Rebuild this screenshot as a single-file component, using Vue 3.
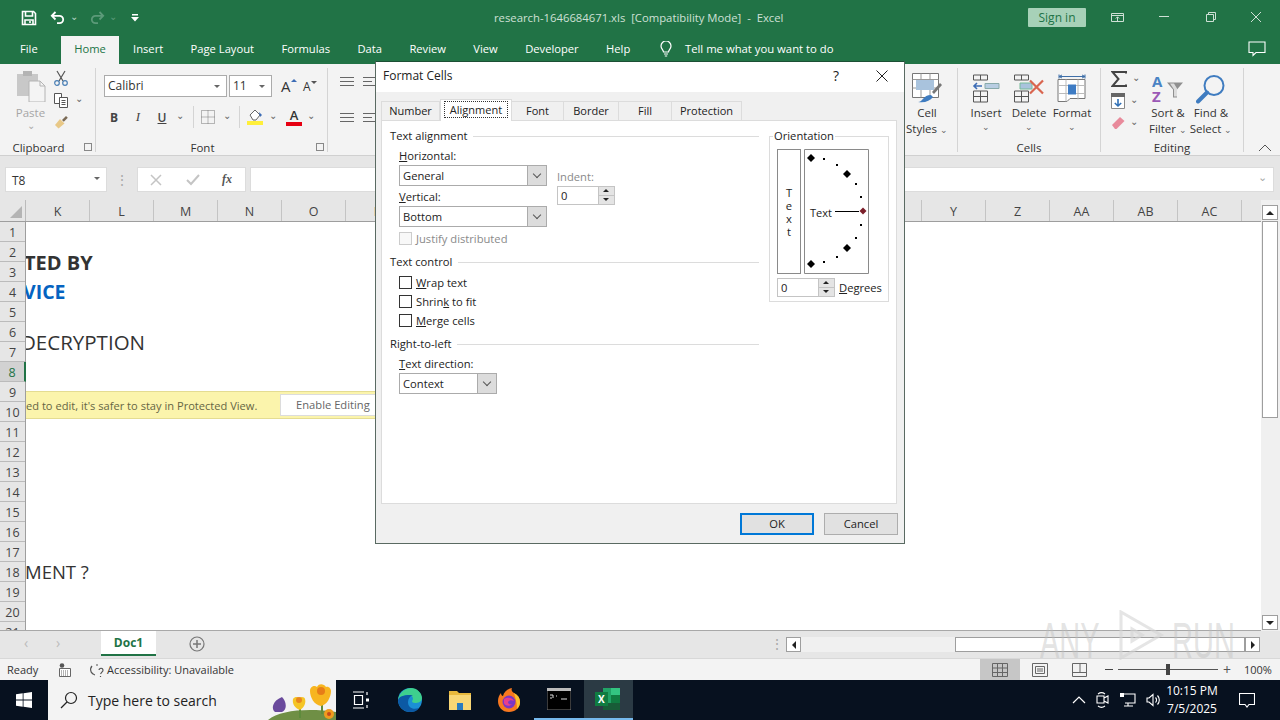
<script setup>
const tabs = ['Insert', 'Page Layout', 'Formulas', 'Data', 'Review', 'View', 'Developer', 'Help']
const columns = ['K', 'L', 'M', 'N', 'O', 'P', 'Q', 'R', 'S', 'T', 'U', 'V', 'W', 'X', 'Y', 'Z', 'AA', 'AB', 'AC', '']
const rows = Array.from({ length: 21 }, (_, i) => i + 1)
const dialogTabs = ['Number', 'Alignment', 'Font', 'Border', 'Fill', 'Protection']
const bigDots = [[7, 9], [43, 25], [43, 99], [7, 115]]
const smallDots = [[20, 10], [33, 16], [52, 35], [57, 48], [57, 76], [52, 89], [33, 108], [20, 113]]
const diamond = (x, y, r) => `${x},${y - r} ${x + r},${y} ${x},${y + r} ${x - r},${y}`
</script>

<template>
  <div class="window">
    <!-- title bar -->
    <div class="titlebar">
      <div class="qat">
        <svg class="q-save" width="16" height="16" viewBox="0 0 16 16" fill="none" stroke="#fff" stroke-width="1.6">
          <path d="M1.5 1.5h11l2 2v11h-13z" />
          <path d="M4.5 2v4h7V2M4 14.5V10h8v4.5" />
          <path d="M9 11v2" />
        </svg>
        <svg class="q-undo" width="16" height="14" viewBox="0 0 16 14" fill="none" stroke="#fff" stroke-width="1.8">
          <path d="M5.5 1 1.8 4.8l3.7 3.7M2 4.8h7.5a3.7 3.7 0 0 1 0 7.4H7" />
        </svg>
        <span class="q-caret">⌄</span>
        <svg class="q-redo" width="16" height="14" viewBox="0 0 16 14" fill="none" stroke="#5c9a79" stroke-width="1.8">
          <path d="M10.5 1l3.7 3.8-3.7 3.7M14 4.8H6.5a3.7 3.7 0 0 0 0 7.4H9" />
        </svg>
        <span class="q-caret dim">⌄</span>
        <svg class="q-more" width="8" height="8" viewBox="0 0 8 8" fill="#fff"><path d="M1 0h6v1.4H1zM0 3h8L4 7.5z" /></svg>
      </div>
      <div class="doc-title">research-1646684671.xls&nbsp; [Compatibility Mode]&nbsp; -&nbsp; Excel</div>
      <div class="signin">Sign in</div>
      <div class="win-btns">
        <svg width="14" height="12" viewBox="0 0 14 12" fill="none" stroke="#cfe0d6"><path d="M.5 2.5h12v8H.5zM.5 4.5h12M6.5 10V6M4.8 7.5l1.7-1.7 1.7 1.7" /></svg>
        <svg width="12" height="12" viewBox="0 0 12 12" stroke="#cfe0d6"><path d="M1 5.5h10" /></svg>
        <svg width="12" height="12" viewBox="0 0 12 12" fill="none" stroke="#cfe0d6"><path d="M1.5 3.5h7v7h-7zM3.5 3.5v-2h7v7h-2" /></svg>
        <svg width="12" height="12" viewBox="0 0 12 12" stroke="#cfe0d6"><path d="M1 1l10 10M11 1 1 11" /></svg>
      </div>
    </div>

    <!-- ribbon tabs -->
    <div class="tabbar">
      <span class="tab file">File</span>
      <span class="tab home">Home</span>
      <span v-for="t in tabs" :key="t" class="tab">{{ t }}</span>
      <svg class="bulb" width="14" height="16" viewBox="0 0 14 16" fill="none" stroke="#fff" stroke-width="1.2">
        <path d="M4.5 11c0-2-2.5-3-2.5-6a5 5 0 0 1 10 0c0 3-2.5 4-2.5 6zM5 13h4M5.8 15h2.4" />
      </svg>
      <span class="tell">Tell me what you want to do</span>
      <svg class="comment" width="18" height="16" viewBox="0 0 18 16" fill="none" stroke="#fff" stroke-width="1.1">
        <path d="M1 1h16v10.500H8l-3 3v-3H1z" />
      </svg>
    </div>

    <!-- ribbon -->
    <div class="ribbon">
      <div class="group g-clip">
        <div class="group-body clip-body">
          <div class="paste">
            <svg width="30" height="32" viewBox="0 0 30 32">
              <path d="M1 4h21v22H1z" fill="#c8c8c8" />
              <path d="M7 1h9v5H7z" fill="#b4b4b4" />
              <path d="M13 11h11l5 5v16H13z" fill="#f4f4f4" stroke="#b4b4b4" />
              <path d="M24 11v5h5" fill="none" stroke="#b4b4b4" />
            </svg>
            <span class="paste-label">Paste</span>
            <span class="caret light">⌄</span>
          </div>
          <div class="clip-tools">
            <svg width="16" height="16" viewBox="0 0 16 16" fill="none" stroke="#555" stroke-width="1.2">
              <path d="M4 1l6 10M12 1 6 11" />
              <circle cx="4" cy="13" r="2.300" stroke="#4a7fb5" />
              <circle cx="12" cy="13" r="2.300" stroke="#4a7fb5" />
            </svg>
            <div class="copy-row">
              <svg width="16" height="16" viewBox="0 0 16 16" fill="#fff" stroke="#555">
                <path d="M1.500 1.500h7v10h-7z" />
                <path d="M6.500 5.500h8v10h-8z" />
                <path d="M8.500 8.500h4M8.500 10.500h4M8.500 12.500h4" />
              </svg>
              <span class="caret">⌄</span>
            </div>
            <svg width="16" height="16" viewBox="0 0 16 16">
              <path d="M9 6l4-4 1.800 1.800-4 4z" fill="#7a6a55" />
              <path d="M2 11l5-6 4.500 4.500-6 5z" fill="#e8c887" />
            </svg>
          </div>
        </div>
        <div class="group-label off-left">Clipboard</div>
        <i class="launcher"></i>
      </div>

      <div class="group g-font">
        <div class="group-body font-body">
          <div class="font-row">
            <div class="rb-select fname">Calibri<i class="mini-arrow"></i></div>
            <div class="rb-select fsize">11<i class="mini-arrow"></i></div>
            <span class="grow">A<i class="up"></i></span>
            <span class="shrink">A<i class="down"></i></span>
          </div>
          <div class="font-row row2">
            <b class="slot w20 fmt-b">B</b>
            <i class="slot w28 fmt-i">I</i>
            <u class="slot w20 fmt-u">U</u>
            <span class="slot w16 caret">⌄</span>
            <span class="rb-sep s1"></span>
            <span class="slot w20 svg-slot">
              <svg width="14" height="14" viewBox="0 0 14 14" fill="none" stroke="#777" stroke-dasharray="1 1">
                <path d="M.5.500h13v13H.5zM7 .500v13M.5 7h13" />
              </svg>
            </span>
            <span class="slot w18 caret">⌄</span>
            <span class="rb-sep s2"></span>
            <span class="slot w20 svg-slot">
              <svg width="18" height="18" viewBox="0 0 18 18">
                <path d="M4 7l5-5 5 5-4 5H7z" fill="#fff" stroke="#666" />
                <path d="M13 4l3 3-2 2z" fill="#3d6cb5" />
                <path d="M1 13h16v4H1z" fill="#ffef3a" />
              </svg>
            </span>
            <span class="slot w16 caret">⌄</span>
            <span class="slot w20 color-slot"><span class="fcolor">A</span></span>
            <span class="slot w14 caret">⌄</span>
          </div>
        </div>
        <div class="group-label off-left">Font</div>
        <i class="launcher"></i>
      </div>

      <div class="group g-middle">
        <div class="align-icons">
          <svg v-for="n in 4" :key="n" width="14" height="12" viewBox="0 0 14 12" stroke="#666">
            <path v-if="n % 2" d="M0 1.500h14M0 5.500h14M0 9.500h14" />
            <path v-else d="M0 1.500h14M0 5.500h9M0 9.500h14" />
          </svg>
        </div>
        <div class="styles">
          <svg width="32" height="32" viewBox="0 0 32 32" fill="none">
            <path d="M1.500 1.500h26v24h-26z" fill="#fff" stroke="#777" />
            <path d="M1.500 7.500h26M10 1.500v24M19 1.500v24M1.500 16h26" stroke="#999" />
            <path d="M5 8h18v10H5z" fill="#a9c3dd" />
            <path d="M21 20l8-9 2 2-8 9z" fill="#777" />
            <path d="M7 30c5 0 5-7 13-7l2 2c-3 4-8 6-15 5z" fill="#3f7cc0" />
          </svg>
          <span class="big-label">Cell</span>
          <span class="big-label">Styles <em>⌄</em></span>
        </div>
      </div>

      <div class="group g-cells">
        <div class="group-body cells-body">
          <div class="big">
            <svg width="28" height="30" viewBox="0 0 28 30" fill="none" stroke="#555">
              <path d="M1.500 1.500h14v5h-14zM8.500 1.500v5M1.500 17.500h14v11h-14zM8.500 17.500v11M1.500 23h14" />
              <path d="M13 10h14v5H13z" fill="#b8cde2" stroke="#8aa" />
              <path d="M10 12.500H2M5 9.500l-3 3 3 3" stroke="#3d6cb5" stroke-width="1.600" />
            </svg>
            <span class="big-label">Insert</span>
            <em class="big-caret">⌄</em>
          </div>
          <div class="big">
            <svg width="32" height="30" viewBox="0 0 32 30" fill="none" stroke="#555">
              <path d="M1.500 1.500h14v5h-14zM8.500 1.500v5M1.500 17.500h14v11h-14zM8.500 17.500v11M1.500 23h14" />
              <path d="M7 9.500h12v6H7z" fill="#a9c3dd" stroke="#7b9" />
              <path d="M17 7l13 13M30 7 17 20" stroke="#d9654f" stroke-width="2.200" />
            </svg>
            <span class="big-label">Delete</span>
            <em class="big-caret">⌄</em>
          </div>
          <div class="big">
            <svg width="30" height="30" viewBox="0 0 30 30" fill="none" stroke="#777">
              <path d="M1 6v22h9l3-3h15V6z" fill="#fff" />
              <path d="M1 12h27M1 20h27M9 6v22M21 6v20" stroke="#bbb" />
              <path d="M11 11h8v10h-8z" fill="#3e7cc4" stroke="none" />
              <path d="M2 3h26M2 1v4M28 1v4M5 1.500 2 3l3 1.500M25 1.500 28 3l-3 1.500" stroke="#3f6fa8" />
            </svg>
            <span class="big-label">Format</span>
            <em class="big-caret">⌄</em>
          </div>
        </div>
        <div class="group-label">Cells</div>
      </div>

      <div class="group g-edit">
        <div class="group-body edit-body">
          <div class="edit-col">
            <div class="edit-row">
              <svg width="16" height="16" viewBox="0 0 16 16" fill="none" stroke="#444" stroke-width="2">
                <path d="M15 2.500V1H1.500l6 7-6 7H15v-1.500" />
              </svg>
              <span class="caret">⌄</span>
            </div>
            <div class="edit-row">
              <svg width="14" height="16" viewBox="0 0 14 16">
                <path d="M.5.500h13v15H.5z" fill="#fff" stroke="#888" />
                <path d="M0 0h14v4H0z" fill="#666" />
                <path d="M7 6v7M3.800 10 7 13l3.200-3" fill="none" stroke="#2f6fb5" stroke-width="1.600" />
              </svg>
              <span class="caret">⌄</span>
            </div>
            <div class="edit-row">
              <svg width="14" height="14" viewBox="0 0 14 14">
                <path d="M1 9l8-8 4.500 4-8 8H4z" fill="#e88a9b" />
              </svg>
              <span class="caret">⌄</span>
            </div>
          </div>
          <div class="big sort">
            <svg width="32" height="30" viewBox="0 0 32 30">
              <text x="0" y="13" class="az a">A</text>
              <text x="0" y="28" class="az z">Z</text>
              <path d="M15 9h16l-6 7v8h-4v-8z" fill="#8f8f8f" />
              <path d="M18 10h4l3 5v8h-3v-7z" fill="#dcdcdc" />
            </svg>
            <span class="big-label">Sort &amp;</span>
            <span class="big-label">Filter <em>⌄</em></span>
          </div>
          <div class="big find">
            <svg width="30" height="30" viewBox="0 0 30 30" fill="none" stroke="#3f7cc0">
              <circle cx="18" cy="12" r="9.500" stroke-width="2" />
              <path d="M11 19 2 28" stroke-width="4" stroke-linecap="round" />
            </svg>
            <span class="big-label">Find &amp;</span>
            <span class="big-label">Select <em>⌄</em></span>
          </div>
        </div>
        <div class="group-label">Editing</div>
      </div>

      <svg class="collapse" width="14" height="8" viewBox="0 0 14 8" fill="none" stroke="#555"><path d="M1 7l6-6 6 6" /></svg>
    </div>

    <!-- formula bar -->
    <div class="formula">
      <div class="namebox">T8<i class="mini-arrow"></i></div>
      <span class="f-dots">⋮</span>
      <div class="f-btns">
        <svg width="12" height="12" viewBox="0 0 12 12" stroke="#c4c4c4" stroke-width="1.500"><path d="M1 1l10 10M11 1 1 11" /></svg>
        <svg width="14" height="12" viewBox="0 0 14 12" fill="none" stroke="#c4c4c4" stroke-width="2"><path d="M1 6l4 4 8-9" /></svg>
        <span class="fx">fx</span>
      </div>
      <div class="f-input"><span class="f-caret">⌄</span></div>
    </div>

    <!-- sheet -->
    <div class="sheet-wrap">
      <div class="sheet">
        <div class="col-head">
          <div class="corner"><i></i></div>
          <div v-for="c in columns" :key="c" class="col">{{ c }}</div>
        </div>
        <div class="sheet-body">
          <div class="row-head">
            <div v-for="r in rows" :key="r" class="row-num" :class="{ active: r === 8 }">{{ r }}</div>
          </div>
          <div class="cells">
            <div class="txt t1">TED BY</div>
            <div class="txt t2">VICE</div>
            <div class="txt t3">DECRYPTION</div>
            <div class="txt t4">MENT ?</div>
            <div class="protected">
              <span class="p-text">ed to edit, it's safer to stay in Protected View.</span>
              <span class="p-btn">Enable Editing</span>
            </div>
          </div>
        </div>
      </div>
      <div class="vscroll">
        <div class="sb-btn"><i class="arr up-a"></i></div>
        <div class="v-thumb"></div>
        <div class="v-space"></div>
        <div class="sb-btn"><i class="arr down-a"></i></div>
      </div>
    </div>

    <!-- sheet tabs -->
    <div class="sheetbar">
      <span class="nav">‹</span>
      <span class="nav n2">›</span>
      <div class="sheet-tab">Doc1</div>
      <svg class="add" width="16" height="16" viewBox="0 0 16 16" fill="none" stroke="#777" stroke-width="1.200">
        <circle cx="8" cy="8" r="7" />
        <path d="M8 4v8M4 8h8" stroke-width="1.500" />
      </svg>
      <span class="h-dots">⋮</span>
      <div class="hscroll">
        <div class="sb-btn h"><i class="arr left-a"></i></div>
        <div class="h-space"></div>
        <div class="h-thumb"></div>
        <div class="sb-btn h"><i class="arr right-a"></i></div>
      </div>
    </div>

    <!-- status bar -->
    <div class="statusbar">
      <span class="ready">Ready</span>
      <svg class="macro" width="12" height="14" viewBox="0 0 12 14">
        <circle cx="3" cy="2.500" r="2.300" fill="#555" />
        <path d="M.5 5.500h11v8H.5z" fill="#fff" stroke="#666" />
        <path d="M2 8h8M2 10h8M2 12h8" stroke="#666" stroke-dasharray="1 1" />
      </svg>
      <svg class="access" width="16" height="14" viewBox="0 0 16 14" fill="none" stroke="#555" stroke-width="1.200">
        <path d="M3 3a5.500 5.500 0 0 0 3 9M7 2h2M2 9l2 2" />
        <path d="M10 7a2 2 0 1 1 3 2l-1.500 2M11.500 13v1" />
      </svg>
      <span class="access-text">Accessibility: Unavailable</span>
      <div class="views">
        <div class="view on">
          <svg width="16" height="14" viewBox="0 0 16 14" fill="none" stroke="#666"><path d="M.5.500h15v13H.5zM5.500.500v13M10.500.500v13M.5 5h15M.5 9.500h15" /></svg>
        </div>
        <div class="view">
          <svg width="16" height="14" viewBox="0 0 16 14" fill="none" stroke="#666"><path d="M.5.500h15v13H.5zM3.500 3.500h9v7h-9zM5 6h6M5 8h6" /></svg>
        </div>
        <div class="view">
          <svg width="16" height="14" viewBox="0 0 16 14" fill="none" stroke="#666"><path d="M.5.500h14v13H.5zM.5 9.500h14M8 .500v9" /></svg>
        </div>
      </div>
      <div class="zoom">
        <i class="z-minus"></i>
        <div class="z-track"><i></i></div>
        <span class="z-sign">+</span>
      </div>
      <span class="zoom-val">100%</span>
    </div>

    <!-- taskbar -->
    <div class="taskbar">
      <div class="start">
        <svg width="16" height="16" viewBox="0 0 16 16" fill="#fff"><path d="M0 2.300 6.700 1.300v6.200H0zM7.500 1.200 16 0v7.500H7.500zM0 8.500h6.700v6.200L0 13.700zM7.500 8.500H16V16l-8.500-1.200z" /></svg>
      </div>
      <div class="search">
        <svg width="18" height="18" viewBox="0 0 18 18" fill="none" stroke="#222" stroke-width="1.200">
          <circle cx="11" cy="7" r="5.500" />
          <path d="M7 11l-6 6" />
        </svg>
        <span class="s-text">Type here to search</span>
        <svg class="flowers" width="70" height="40" viewBox="0 0 70 40">
          <path d="M2 40c12-10 40-12 68-8v8z" fill="#6f8f45" />
          <path d="M16 17c5 5 5 13 0 15h-7c-4-3-3-11 7-15z" fill="#6a4a9c" />
          <path d="M34 38V20M56 34V18" stroke="#5e8b3c" stroke-width="2" />
          <path d="M27 19c2-3 5-2 6-1 2-2 6-1 6 1 1 3 0 8-5 11-5-2-8-6-7-11z" fill="#f5c526" />
          <circle cx="33" cy="20" r="3" fill="#e8861f" />
          <path d="M44 11c0-5 5-6 7-4 2-4 7-3 9 0 3-1 5 2 5 4 0 6-4 14-10 15-7-1-11-9-11-15z" fill="#f7b51f" />
          <circle cx="55" cy="11" r="4" fill="#e77d18" />
          <circle cx="63" cy="34" r="5" fill="#ef9b1e" />
          <circle cx="63" cy="34" r="2" fill="#c7491c" />
        </svg>
      </div>
      <div class="task-icons">
        <div class="task-icon">
          <svg width="16" height="18" viewBox="0 0 16 18" fill="none" stroke="#fff" stroke-width="1.200">
            <path d="M0 1h11M0 17h11M1.500 4.500h8v9h-8z" />
            <path d="M14 1v3M14 14v3" />
            <path d="M13 7.500h3v3h-3z" fill="#fff" stroke="none" />
          </svg>
        </div>
        <div class="task-icon">
          <svg width="26" height="26" viewBox="0 0 26 26">
            <circle cx="13" cy="13" r="12" fill="#1b8fd4" />
            <path d="M1 13C2 5 9 1 14 1c6 0 11 5 11 10 0 4-4 5-7 5-2 0-3-1-3-2 2-2 1-6-4-6-4 0-7 2-10 5z" fill="#3ecf8e" />
            <path d="M1 13c0 7 6 12 12 12 4 0 7-1 9-4-6 2-11 0-11-6 0-3 2-6 5-7-7 0-13 0-15 5z" fill="#0c59a4" />
          </svg>
        </div>
        <div class="task-icon">
          <svg width="24" height="22" viewBox="0 0 24 22">
            <path d="M1 2h8l2 2h12v17H1z" fill="#e8b93c" />
            <path d="M1 6h22v15H1z" fill="#f8d775" />
            <path d="M9 14h6v7H9z" fill="#2a7cc0" />
          </svg>
        </div>
        <div class="task-icon">
          <svg width="24" height="26" viewBox="0 0 24 26">
            <path d="M12 25C5 25 1 20 1 14c0-3 1-6 3-8 0 2 1 3 2 3 1-4 4-7 9-8-1 2 0 4 2 5 4 2 6 5 6 9 0 6-5 10-11 10z" fill="#f7781f" />
            <path d="M17 6c4 2 6 5 6 9 0 3-1 5-3 7 0-7-2-12-3-16z" fill="#fbc02d" />
            <circle cx="12" cy="15" r="6.500" fill="#7b36c5" />
            <path d="M7 12c3-2 8-2 10 2-2-1-5-1-6 1 0 2 2 3 4 2-2 3-7 2-8-1z" fill="#e83e8c" />
          </svg>
        </div>
        <div class="task-icon lit">
          <svg width="24" height="22" viewBox="0 0 24 22">
            <path d="M0 0h24v22H0z" fill="#000" stroke="#777" />
            <path d="M0 0h24v3H0z" fill="#bbb" />
            <path d="M3 7h3M6 7v3M3 10h2M9 8h1M14 11h6" stroke="#ddd" fill="none" />
          </svg>
        </div>
        <div class="task-icon lit active">
          <svg width="26" height="24" viewBox="0 0 26 24">
            <path d="M8 1h17v22H8z" fill="#21a366" />
            <path d="M16 1h9v7h-9z" fill="#33c481" />
            <path d="M16 8h9v8h-9z" fill="#107c41" />
            <path d="M8 16h17v7H8z" fill="#185c37" />
            <path d="M0 5h13v14H0z" fill="#107c41" />
            <text x="3" y="16" class="xl">X</text>
          </svg>
        </div>
      </div>
      <div class="tray">
        <svg width="14" height="8" viewBox="0 0 14 8" fill="none" stroke="#fff" stroke-width="1.200"><path d="M1 7l6-6 6 6" /></svg>
        <svg width="14" height="16" viewBox="0 0 14 16" fill="none" stroke="#fff" stroke-width="1.100">
          <path d="M1 4h7v7H1zM8 6l4-2v7l-4-2M2 2c2-1.500 5-1.500 7 0M2 14c2 1.500 5 1.500 7 0" />
        </svg>
        <svg width="16" height="14" viewBox="0 0 16 14" fill="none" stroke="#fff" stroke-width="1.100">
          <path d="M3 1h12v9H5M8 10v3M4 13h9" />
          <path d="M0 0h4v4H0z" fill="#fff" stroke="none" />
        </svg>
        <svg width="16" height="14" viewBox="0 0 16 14" fill="none" stroke="#fff" stroke-width="1.100">
          <path d="M1 5h2l4-3.500v11L3 9H1zM9.500 4.500a3.500 3.500 0 0 1 0 5M11.500 2.500a6.500 6.500 0 0 1 0 9" />
        </svg>
      </div>
      <div class="clock">
        <span>10:15 PM</span>
        <span>7/5/2025</span>
      </div>
      <svg class="notif" width="16" height="15" viewBox="0 0 16 15" fill="none" stroke="#fff" stroke-width="1.100">
        <path d="M.5.500h15v11H10l-2 2.500-2-2.500H.5z" />
      </svg>
    </div>

    <!-- watermark -->
    <div class="watermark">
      <span>ANY</span>
      <svg width="46" height="50" viewBox="0 0 46 50" fill="none" stroke="#d4d4d4" stroke-width="3" opacity="0.6">
        <path d="M3 2l40 23L3 48zM14 19v12l10-6z" />
      </svg>
      <span>RUN</span>
    </div>

    <!-- dialog -->
    <div class="dialog">
      <div class="d-title">
        <span class="d-name">Format Cells</span>
        <span class="d-help">?</span>
        <svg class="d-close" width="12" height="12" viewBox="0 0 12 12" stroke="#222"><path d="M.5.500l11 11M11.500.500l-11 11" /></svg>
      </div>
      <div class="d-body">
        <div class="d-tabs">
          <div v-for="t in dialogTabs" :key="t" class="d-tab" :class="[t.toLowerCase(), { on: t === 'Alignment' }]">
            <span>{{ t }}</span>
          </div>
        </div>
        <div class="pane">
          <div class="left-col">
            <div class="heading">Text alignment<i></i></div>
            <div class="align-wrap">
              <div class="stack">
                <div class="lab first"><u>H</u>orizontal:</div>
                <div class="sel"><span>General</span><b><i class="chev"></i></b></div>
                <div class="lab second"><u>V</u>ertical:</div>
                <div class="sel"><span>Bottom</span><b><i class="chev"></i></b></div>
              </div>
              <div class="indent">
                <div class="lab dimmed">Indent:</div>
                <div class="spin w58"><span>0</span><div class="spin-btns"><i class="sp-up"></i><i class="sp-down"></i></div></div>
              </div>
            </div>
            <div class="check justify"><i class="box off"></i><span>Justify distributed</span></div>
            <div class="heading h2">Text control<i></i></div>
            <div class="check c-first"><i class="box"></i><span><u>W</u>rap text</span></div>
            <div class="check"><i class="box"></i><span>Shrin<u>k</u> to fit</span></div>
            <div class="check"><i class="box"></i><span><u>M</u>erge cells</span></div>
            <div class="heading h2">Right-to-left<i></i></div>
            <div class="lab third"><u>T</u>ext direction:</div>
            <div class="sel short"><span>Context</span><b><i class="chev"></i></b></div>
          </div>
          <fieldset class="orient">
            <legend>Orientation</legend>
            <div class="o-boxes">
              <div class="o-vert"><span>T</span><span>e</span><span>x</span><span>t</span></div>
              <svg class="o-arc" width="65" height="125" viewBox="0 0 65 125">
                <path d="M.5.500h64v124H.5z" fill="#fff" stroke="#8a8a8a" />
                <polygon v-for="d in bigDots" :key="d[1]" :points="diamond(d[0], d[1], 4)" fill="#000" />
                <rect v-for="d in smallDots" :key="d[1]" :x="d[0] - 1" :y="d[1] - 1" width="2" height="2" fill="#000" />
                <text x="6" y="68" class="arc-text">Text</text>
                <path d="M31 62.500h24" stroke="#000" />
                <polygon :points="diamond(59, 62, 3.500)" fill="#7b1f2a" />
              </svg>
            </div>
            <div class="o-degrees">
              <div class="spin w58"><span>0</span><div class="spin-btns"><i class="sp-up"></i><i class="sp-down"></i></div></div>
              <span class="deg"><u>D</u>egrees</span>
            </div>
          </fieldset>
        </div>
        <div class="d-foot">
          <div class="btn ok">OK</div>
          <div class="btn">Cancel</div>
        </div>
      </div>
    </div>
  </div>
</template>

<style>
html, body { margin: 0; background: #fff; overflow: hidden; }
</style>

<style scoped>
.window {
  position: relative;
  width: 1280px;
  height: 720px;
  overflow: hidden;
  display: flex;
  flex-direction: column;
  font-family: "Open Sans", "Noto Sans", sans-serif;
  font-size: 11.5px;
  color: #333;
}
svg { display: block; flex: none; }

/* title bar */
.titlebar {
  height: 36px;
  background: #217346;
  display: flex;
  align-items: center;
  color: #fff;
  flex: none;
}
.qat { display: flex; align-items: center; width: 494px; padding-left: 21px; box-sizing: border-box; }
.q-undo { margin-left: 13px; }
.q-caret { font-size: 10px; color: #b9d3c5; margin: -5px 0 0 4px; width: 14px; }
.q-caret.dim { color: #5c9a79; }
.q-redo { margin-left: 5px; }
.q-more { margin-left: 8px; }
.doc-title { width: 534px; color: #cfe0d6; white-space: nowrap; font-size: 11.3px; margin-top: -2px; }
.signin {
  width: 58px;
  height: 19px;
  line-height: 19px;
  text-align: center;
  background: #a7d1b8;
  color: #217346;
  font-size: 12px;
  border-radius: 1px;
  margin-top: -1px;
}
.win-btns { margin-left: 25px; display: flex; align-items: center; gap: 33px; margin-top: -2px; }
.win-btns svg:nth-child(3) { margin-left: 2px; }

/* ribbon tabs */
.tabbar {
  height: 28px;
  background: #217346;
  display: flex;
  align-items: center;
  color: #fff;
  flex: none;
}
.tab { padding: 0 13.7px 2px; font-size: 11.2px; line-height: 26px; }
.tab.file { padding: 0 23px 2px 20px; }
.tab.home { background: #f3f3f3; color: #217346; padding: 0 13.5px 2px; }
.bulb { margin-left: 15px; margin-top: -3px; }
.tell { margin-left: 12px; margin-top: -3px; font-size: 11.3px; }
.comment { margin-left: auto; margin-right: 14px; margin-top: -3px; }

/* ribbon */
.ribbon {
  height: 92px;
  background: #f3f3f3;
  border-bottom: 1px solid #d0d0d0;
  box-sizing: border-box;
  display: flex;
  padding-top: 4px;
  flex: none;
  position: relative;
}
.group {
  height: 84px;
  border-right: 1px solid #d4d4d4;
  display: flex;
  flex-direction: column;
  position: relative;
  box-sizing: border-box;
}
.group-body { height: 74px; display: flex; flex: none; box-sizing: border-box; }
.group-label { text-align: center; font-size: 11.5px; line-height: 12px; flex: none; }
.group-label.off-left { padding-right: 18px; }
.launcher {
  position: absolute;
  right: 3px;
  bottom: 1px;
  width: 6px;
  height: 6px;
  border: 1px solid #888;
}
.caret { font-size: 10px; line-height: 8px; color: #666; height: 12px; }
.caret.light { color: #aaa; }
.g-clip { width: 96px; }
.clip-body { padding: 2px 0 0 14px; }
.paste { display: flex; flex-direction: column; align-items: center; width: 33px; }
.paste-label { color: #a6a6a6; margin-top: 3px; line-height: 16px; }
.clip-tools { display: flex; flex-direction: column; gap: 6px; margin-left: 6px; }
.copy-row { display: flex; align-items: center; gap: 6px; }
.g-font { width: 232px; }
.font-body { flex-direction: column; padding: 7px 0 0 8px; }
.font-row { display: flex; align-items: center; }
.rb-select {
  height: 22px;
  box-sizing: border-box;
  background: #fff;
  border: 1px solid #ababab;
  line-height: 20px;
  padding-left: 3px;
  position: relative;
  font-size: 12px;
}
.fname { width: 123px; }
.fsize { width: 43px; margin-left: 2px; }
.mini-arrow {
  position: absolute;
  right: 6px;
  top: 9px;
  border: 3px solid transparent;
  border-top: 3px solid #666;
  border-bottom: 0;
}
.grow { font-size: 15px; margin-left: 9px; width: 24px; position: relative; }
.shrink { font-size: 12px; margin-left: -2px; width: 18px; position: relative; }
.up, .down { position: absolute; left: 10px; top: 3px; border: 3px solid transparent; border-bottom: 3px solid #3d6cb5; border-top: 0; }
.down { border-bottom: 0; border-top: 3px solid #555; left: 8px; }
.row2 { margin-top: 8px; height: 24px; }
.slot { display: block; text-align: center; flex: none; font-style: normal; }
.svg-slot { display: flex; justify-content: center; }
.color-slot { display: flex; justify-content: center; margin-left: 3px; }
.w14 { width: 14px; }
.w16 { width: 16px; }
.w18 { width: 18px; }
.w20 { width: 20px; }
.w28 { width: 28px; }
.fmt-b { font-size: 12px; color: #444; }
.fmt-i { font-family: "Liberation Serif", serif; font-style: italic; font-size: 13px; color: #444; }
.fmt-u { font-weight: 600; font-size: 12px; color: #444; }
.rb-sep { width: 1px; height: 22px; background: #d4d4d4; flex: none; }
.s1 { margin: 0 4px 0 5px; }
.s2 { margin: 0 5px 0 3px; }
.fcolor {
  width: 16px;
  text-align: center;
  font-size: 13px;
  font-weight: 600;
  line-height: 14px;
  border-bottom: 4px solid #e60012;
}
.g-middle { width: 630px; flex: none; flex-direction: row; }
.align-icons { margin: 8px 0 0 12px; display: grid; grid-template-columns: 14px 14px; gap: 24px 9px; height: 48px; }
.styles { margin-left: auto; margin-right: 7px; margin-top: 4px; display: flex; flex-direction: column; align-items: center; width: 46px; }
.styles svg { margin-bottom: 1px; }
.big-label { line-height: 16px; white-space: nowrap; font-size: 11.5px; }
.big-label em, .big-caret { font-style: normal; font-size: 9px; color: #666; }
.big-caret { line-height: 12px; }
.g-cells { width: 143px; flex: none; }
.cells-body { padding: 4px 0 0 8px; gap: 3px; }
.big { display: flex; flex-direction: column; align-items: center; width: 40px; }
.big svg { height: 33px; }
.g-edit { width: 143px; flex: none; }
.edit-body { padding: 2px 0 0 10px; }
.edit-col { display: flex; flex-direction: column; gap: 5px; width: 38px; }
.edit-row { display: flex; align-items: center; gap: 5px; height: 17px; }
.big.sort { margin: 2px 0 0 -3px; width: 44px; }
.big.find { margin: 2px 0 0 -1px; width: 44px; }
.az { font-size: 15px; font-weight: 700; }
.az.a { fill: #4a83c4; }
.az.z { fill: #9b59b6; }
.collapse { position: absolute; right: 8px; bottom: 3px; }

/* formula bar */
.formula {
  height: 44px;
  background: #e6e6e6;
  display: flex;
  align-items: flex-start;
  padding: 11px 6px 0 5px;
  box-sizing: border-box;
  flex: none;
}
.namebox {
  width: 102px;
  height: 25px;
  line-height: 25px;
  background: #fff;
  border: 1px solid #dcdcdc;
  box-sizing: border-box;
  padding-left: 6px;
  position: relative;
  font-size: 12px;
}
.f-dots { width: 30px; text-align: center; color: #aaa; line-height: 25px; font-size: 14px; }
.f-btns {
  width: 109px;
  height: 25px;
  background: #fff;
  border: 1px solid #dcdcdc;
  box-sizing: border-box;
  display: flex;
  align-items: center;
  padding-left: 12px;
  gap: 24px;
}
.fx { font-family: "Liberation Serif", serif; font-style: italic; font-size: 12px; color: #555; font-weight: 700; margin-left: -2px; }
.f-input {
  flex: 1;
  height: 25px;
  background: #fff;
  border: 1px solid #dcdcdc;
  box-sizing: border-box;
  margin-left: 4px;
  text-align: right;
  padding-right: 6px;
  line-height: 18px;
}
.f-caret { color: #aaa; font-size: 11px; }

/* sheet */
.sheet-wrap { display: flex; height: 431px; flex: none; }
.sheet { width: 1261px; height: 431px; display: flex; flex-direction: column; background: #fff; border-bottom: 1px solid #a8a8a8; box-sizing: border-box; }
.col-head { height: 22px; display: flex; background: #e6e6e6; border-bottom: 1px solid #9e9e9e; box-sizing: border-box; flex: none; }
.corner { width: 26px; position: relative; border-right: 1px solid #bbb; box-sizing: border-box; }
.corner i { position: absolute; right: 3px; bottom: 3px; border: 6px solid #b4b4b4; border-left-color: transparent; border-top-color: transparent; }
.col {
  width: 64px;
  box-sizing: border-box;
  flex: none;
  text-align: center;
  line-height: 24px;
  font-size: 12.5px;
  color: #444;
  border-right: 1px solid #c4c4c4;
  overflow: hidden;
}
.col:last-child { width: 17px; border: 0; }
.sheet-body { flex: 1; display: flex; overflow: hidden; }
.row-head { width: 26px; flex: none; background: #e6e6e6; border-right: 1px solid #9e9e9e; box-sizing: border-box; }
.row-num {
  height: 20px;
  box-sizing: border-box;
  border-bottom: 1px solid #bbb;
  text-align: center;
  padding-top: 2px;
  line-height: 18px;
  font-size: 12.5px;
  color: #444;
}
.row-num.active { background: #d2d2d2; color: #217346; border-right: 2px solid #217346; margin-right: -1px; }
.cells {
  flex: 1;
  display: grid;
  grid-template-rows: repeat(21, 20px);
  overflow: hidden;
  min-width: 0;
}
.txt { grid-column: 1; white-space: nowrap; font-size: 20px; color: #333; align-self: center; }
.t1 { grid-row: 2 / 4; font-weight: 700; margin-left: -2px; }
.t2 { grid-row: 4 / 5; font-weight: 700; color: #0563c1; margin: -1px 0 0 -3px; font-size: 19.5px; }
.t3 { grid-row: 6 / 8; margin-left: -5px; font-size: 20.5px; }
.t4 { grid-row: 17 / 19; align-self: end; margin-bottom: -2px; margin-left: -1px; font-size: 18.5px; }
.protected {
  grid-column: 1;
  grid-row: 9 / 11;
  margin: 9px 0 3px;
  width: 500px;
  background: #fbf4ac;
  border-top: 1px solid #e4dc92;
  border-bottom: 1px solid #e4dc92;
  box-sizing: border-box;
  display: flex;
  align-items: center;
  white-space: nowrap;
}
.p-text { width: 254px; overflow: hidden; font-size: 11.1px; color: #666644; }
.p-btn {
  background: #fff;
  border: 1px solid #dcdcdc;
  height: 22px;
  line-height: 20px;
  box-sizing: border-box;
  width: 120px;
  padding-left: 15px;
  color: #666;
  font-size: 11.200px;
}

/* scrollbars */
.vscroll { width: 19px; background: #f0f0f0; display: flex; flex-direction: column; padding: 5px 2px 1px 1px; box-sizing: border-box; }
.sb-btn { height: 15px; background: #fff; border: 1px solid #9e9e9e; box-sizing: border-box; display: flex; align-items: center; justify-content: center; flex: none; }
.sb-btn.h { width: 15px; }
.v-thumb { height: 197px; background: #fff; border: 1px solid #9e9e9e; box-sizing: border-box; margin-top: 1px; }
.v-space { flex: 1; }
.arr { display: block; border: 4px solid transparent; }
.up-a { border-bottom-color: #222; border-top: 0; }
.down-a { border-top-color: #222; border-bottom: 0; }
.left-a { border-right-color: #222; border-left: 0; }
.right-a { border-left-color: #222; border-right: 0; }

/* sheet tabs */
.sheetbar {
  height: 27px;
  background: #e6e6e6;
  display: flex;
  align-items: flex-start;
  box-sizing: border-box;
  flex: none;
  color: #bbb;
}
.nav { margin-left: 24px; font-size: 14px; line-height: 24px; width: 6px; }
.nav.n2 { margin-left: 26px; }
.sheet-tab {
  margin-left: 39px;
  width: 55px;
  height: 25px;
  background: #fff;
  border-bottom: 2px solid #217346;
  box-sizing: border-box;
  color: #217346;
  font-weight: 700;
  font-size: 12px;
  line-height: 24px;
  text-align: center;
}
.add { margin: 5px 0 0 33px; }
.h-dots { margin-left: 565px; width: 8px; line-height: 25px; font-size: 14px; color: #aaa; }
.hscroll { margin: 6px 0 0 8px; width: 474px; display: flex; background: #f0f0f0; }
.h-space { flex: 1; }
.h-thumb { width: 290px; background: #fff; border: 1px solid #9e9e9e; box-sizing: border-box; }

/* status bar */
.statusbar {
  height: 22px;
  background: #f3f3f3;
  border-top: 1px solid #d8d8d8;
  box-sizing: border-box;
  display: flex;
  align-items: center;
  flex: none;
  font-size: 11px;
}
.ready { margin-left: 7px; width: 52px; }
.access { margin-left: 18px; }
.access-text { margin-left: 2px; width: 873px; white-space: nowrap; }
.views { display: flex; height: 21px; }
.view { width: 40px; display: flex; align-items: center; justify-content: center; }
.view.on { background: #c6c6c6; }
.zoom { display: flex; align-items: center; margin-left: 4px; width: 134px; }
.z-minus { display: block; width: 8px; height: 1px; background: #444; margin: 0 1px; }
.z-sign { width: 10px; font-size: 14px; color: #555; text-align: center; line-height: 14px; }
.z-track { width: 100px; height: 1px; background: #555; margin: 0 4px; position: relative; }
.z-track i { position: absolute; left: 48px; top: -5px; width: 4px; height: 11px; background: #444; }
.zoom-val { margin-left: 6px; }

/* taskbar */
.taskbar { height: 40px; background: #07111f; display: flex; align-items: center; color: #fff; flex: none; }
.start { width: 48px; display: flex; justify-content: center; }
.search {
  width: 288px;
  height: 40px;
  background: #f3f3f3;
  display: flex;
  align-items: center;
  box-sizing: border-box;
  padding-left: 12px;
  position: relative;
}
.s-text { margin-left: 10px; color: #222; font-size: 14px; white-space: nowrap; }
.flowers { position: absolute; right: 0; top: 0; }
.task-icons { display: flex; }
.task-icon { width: 49.500px; height: 40px; display: flex; align-items: center; justify-content: center; box-sizing: border-box; }
.task-icon.lit { border-bottom: 2px solid #76b9ed; }
.task-icon.active { background: #2b3a44; }
.xl { font-size: 10px; font-weight: 700; fill: #fff; }
.tray { margin-left: 439px; display: flex; align-items: center; gap: 10px; width: 84px; }
.clock { display: flex; flex-direction: column; align-items: center; width: 60px; margin-left: 6px; font-size: 12px; line-height: 18px; }
.notif { margin-left: 17px; }

/* watermark */
.watermark {
  position: absolute;
  left: 1040px;
  top: 610px;
  display: flex;
  align-items: flex-end;
  font-size: 50px;
  line-height: 50px;
  color: rgba(190, 190, 190, 0.42);
  pointer-events: none;
  white-space: nowrap;
  font-family: "Liberation Sans", sans-serif;
}
.watermark span { display: block; width: 60px; transform: scaleX(0.58); transform-origin: left; margin-bottom: -6px; }
.watermark svg { margin: 0 8px 0 18px; }

/* dialog */
.dialog {
  position: absolute;
  left: 375px;
  top: 61px;
  width: 530px;
  height: 483px;
  background: #f0f0f0;
  border: 1px solid #5a6a62;
  border-top-color: #1c4f35;
  box-sizing: border-box;
  display: flex;
  flex-direction: column;
  font-size: 11.2px;
  color: #222;
}
.d-title { height: 30px; background: #fff; display: flex; align-items: center; flex: none; padding-bottom: 3px; box-sizing: border-box; }
.d-name { margin-left: 7px; font-size: 12px; }
.d-help { margin-left: auto; font-size: 14px; }
.d-close { margin: 0 16px 0 37px; }
.d-body { flex: 1; display: flex; flex-direction: column; padding: 0 7px 0 5px; }
.d-tabs { height: 28px; display: flex; align-items: flex-end; flex: none; }
.d-tab {
  height: 19px;
  line-height: 18px;
  text-align: center;
  background: #f0f0f0;
  border: 1px solid #dcdcdc;
  border-bottom: 0;
  border-left: 0;
  box-sizing: border-box;
  font-size: 11px;
}
.d-tab.number { width: 59px; border-left: 1px solid #dcdcdc; }
.d-tab.alignment { width: 72px; height: 22px; background: #fff; border-left: 1px solid #dcdcdc; margin-bottom: -1px; position: relative; z-index: 1; line-height: 20px; }
.d-tab.alignment span { border: 1px dotted #333; padding: 0 5px; }
.d-tab.font { width: 52px; }
.d-tab.border { width: 55px; }
.d-tab.fill { width: 53px; }
.d-tab.protection { width: 70px; }
.pane {
  height: 384px;
  background: #fff;
  border: 1px solid #dcdcdc;
  box-sizing: border-box;
  display: flex;
  padding: 8px 0 0 8px;
  flex: none;
}
.left-col { width: 369px; flex: none; }
.heading { height: 14px; line-height: 14px; display: flex; align-items: center; gap: 6px; white-space: nowrap; }
.heading i { flex: 1; height: 1px; background: #dcdcdc; }
.heading.h2 { margin-top: 10px; }
.align-wrap { display: flex; }
.stack { width: 148px; margin-left: 9px; }
.lab { height: 14px; line-height: 14px; white-space: nowrap; }
.lab.first { margin-top: 6px; }
.lab.second { margin-top: 4px; }
.lab.third { margin: 6px 0 0 9px; }
.dimmed { color: #8a8a8a; }
.sel {
  height: 21px;
  margin-top: 2px;
  border: 1px solid #ababab;
  box-sizing: border-box;
  display: flex;
  background: #fff;
}
.sel.short { width: 98px; margin: 2px 0 0 9px; }
.sel span { flex: 1; padding-left: 3px; line-height: 19px; }
.sel b {
  width: 18px;
  background: #dcdcdc;
  border-left: 1px solid #ababab;
  display: flex;
  align-items: center;
  justify-content: center;
}
.chev { width: 5px; height: 5px; border: solid #555; border-width: 0 1px 1px 0; transform: rotate(45deg); margin-top: -3px; }
.indent { margin: 27px 0 0 10px; }
.spin {
  height: 19px;
  border: 1px solid #c4c4c4;
  box-sizing: border-box;
  display: flex;
  background: #fff;
  margin-top: 2px;
}
.spin.w58 { width: 58px; }
.spin span { flex: 1; padding-left: 3px; line-height: 17px; }
.spin-btns { width: 15px; display: flex; flex-direction: column; background: #e4e4e4; border-left: 1px solid #c4c4c4; }
.spin-btns i { flex: 1; position: relative; }
.sp-up::after, .sp-down::after {
  content: '';
  position: absolute;
  left: 4px;
  top: 2px;
  border: 3px solid transparent;
  border-top: 0;
  border-bottom: 3px solid #222;
}
.sp-down { border-top: 1px solid #c4c4c4; }
.sp-down::after { border-bottom: 0; border-top: 3px solid #222; }
.check { display: flex; align-items: center; height: 14px; margin: 5px 0 0 9px; white-space: nowrap; }
.check.justify { color: #8a8a8a; margin-top: 4px; }
.check.c-first { margin-top: 6px; }
.box { width: 13px; height: 13px; border: 1px solid #333; box-sizing: border-box; margin-right: 4px; background: #fff; }
.box.off { border-color: #ccc; background: #f8f8f8; }
.orient {
  margin: 0 0 0 10px;
  width: 120px;
  height: 173px;
  box-sizing: border-box;
  border: 1px solid #dcdcdc;
  padding: 6px 0 0 7px;
  min-width: 0;
}
.orient legend { padding: 0 1px; margin-left: -4px; line-height: 14px; font-size: 11.2px; }
.o-boxes { display: flex; gap: 3px; }
.o-vert {
  width: 24px;
  height: 125px;
  border: 1px solid #8a8a8a;
  box-sizing: border-box;
  display: flex;
  flex-direction: column;
  align-items: center;
  justify-content: center;
  line-height: 13px;
}
.arc-text { font-size: 11px; fill: #222; font-family: "Open Sans", sans-serif; }
.o-degrees { display: flex; align-items: center; margin-top: 2px; }
.deg { margin: 2px 0 0 4px; }
.d-foot { display: flex; justify-content: flex-end; gap: 10px; margin-top: 9px; margin-right: -1px; }
.btn {
  width: 74px;
  height: 22px;
  line-height: 20px;
  text-align: center;
  background: #e1e1e1;
  border: 1px solid #adadad;
  box-sizing: border-box;
}
.btn.ok { border: 2px solid #0078d7; line-height: 18px; }
</style>
